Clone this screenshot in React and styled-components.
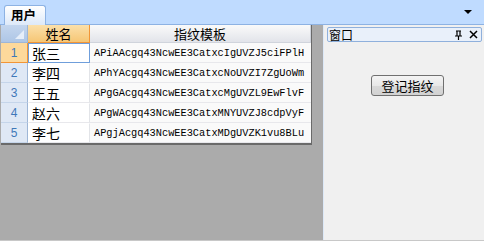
import React from "react";
import styled, { createGlobalStyle } from "styled-components";

const rows = [
  { id: 1, name: "张三", tpl: "APiAAcgq43NcwEE3CatxcIgUVZJ5ciFPlH" },
  { id: 2, name: "李四", tpl: "APhYAcgq43NcwEE3CatxcNoUVZI7ZgUoWm" },
  { id: 3, name: "王五", tpl: "APgGAcgq43NcwEE3CatxcMgUVZL9EwFlvF" },
  { id: 4, name: "赵六", tpl: "APgWAcgq43NcwEE3CatxMNYUVZJ8cdpVyF" },
  { id: 5, name: "李七", tpl: "APgjAcgq43NcwEE3CatxMDgUVZK1vu8BLu" },
];

const GlobalStyle = createGlobalStyle`
  body {
    margin: 0;
    font-family: "Noto Sans CJK SC", "Liberation Sans", sans-serif;
  }
`;

const App = () => (
  <>
    <GlobalStyle />
    <Frame>
      <TopBar>
        <Tab>用户</Tab>
        <DropArrow />
      </TopBar>
      <Body>
        <GridArea>
          <Grid>
            <Corner />
            <HeaderCell $active>姓名</HeaderCell>
            <HeaderCell>指纹模板</HeaderCell>
            {rows.map((r, i) => (
              <React.Fragment key={r.id}>
                <RowNum $active={i === 0}>{r.id}</RowNum>
                <NameCell $focused={i === 0}>{r.name}</NameCell>
                <TplCell>{r.tpl}</TplCell>
              </React.Fragment>
            ))}
          </Grid>
        </GridArea>
        <Splitter />
        <SidePanel>
          <PanelTitle>
            <span>窗口</span>
            <TitleIcons>
              <svg width="9" height="10" viewBox="0 0 9 10">
                <path d="M2 1h5M3 1v5M6 1v5M1 6h7M4.5 6v4" stroke="#000" strokeWidth="1.2" fill="none" />
              </svg>
              <svg width="9" height="9" viewBox="0 0 9 9">
                <path d="M1 1l7 7M8 1l-7 7" stroke="#000" strokeWidth="1.5" />
              </svg>
            </TitleIcons>
          </PanelTitle>
          <ButtonRow>
            <Button>登记指纹</Button>
          </ButtonRow>
        </SidePanel>
      </Body>
    </Frame>
  </>
);

export default App;

const Frame = styled.div`
  width: 484px;
  height: 241px;
  display: flex;
  flex-direction: column;
  box-sizing: border-box;
  border-bottom: 1px solid #c8c8c8;
  overflow: hidden;
`;

const TopBar = styled.div`
  height: 24px;
  flex: none;
  background: #bfdbff;
  border-bottom: 1px solid #8db2e3;
  display: flex;
  align-items: flex-end;
  padding: 0 0 0 4px;
  position: relative;
`;

const Tab = styled.div`
  width: 42px;
  height: 20px;
  box-sizing: border-box;
  margin-bottom: -1px;
  border: 1px solid #8db2e3;
  border-bottom: none;
  border-radius: 3px 3px 0 0;
  background: linear-gradient(#ffffff, #dde9f9);
  font-size: 12.5px;
  font-weight: bold;
  line-height: 18px;
  padding-left: 6px;
  color: #000;
`;

const DropArrow = styled.div`
  position: absolute;
  right: 12px;
  top: 10px;
  width: 0;
  height: 0;
  border-left: 4px solid transparent;
  border-right: 4px solid transparent;
  border-top: 4px solid #000;
`;

const Body = styled.div`
  flex: 1;
  display: flex;
  min-height: 0;
`;

const GridArea = styled.div`
  width: 323px;
  flex: none;
  background: #ababab;
  padding-left: 1px;
  box-sizing: border-box;
`;

const Grid = styled.div`
  width: 311px;
  display: grid;
  grid-template-columns: 27px 62px 1fr;
  grid-auto-rows: 20px;
  grid-template-rows: 18px;
  background: #fafafa;
  border-right: 1px solid #6a6a6a;
  border-bottom: 2px solid #6a6a6a;
  box-sizing: border-box;
`;

const Corner = styled.div`
  background: linear-gradient(#c4d6ee, #aec6e6);
  border-right: 1px solid #9eb6d6;
  border-bottom: 1px solid #9eb6d6;
  position: relative;
  &::after {
    content: "";
    position: absolute;
    right: 3px;
    bottom: 3px;
    border-left: 9px solid transparent;
    border-bottom: 9px solid #e6eef9;
  }
`;

const HeaderCell = styled.div`
  display: flex;
  align-items: center;
  justify-content: center;
  font-size: 13px;
  color: #000;
  box-sizing: border-box;
  background: ${(p) =>
    p.$active ? "linear-gradient(#fbe0aa, #f6c675)" : "linear-gradient(#fafafa, #e2e4ea)"};
  border: 1px solid ${(p) => (p.$active ? "#f29536" : "#d0d4dc")};
  border-top: none;
  border-left: none;
`;

const RowNum = styled.div`
  display: flex;
  align-items: center;
  justify-content: center;
  font-size: 12px;
  font-family: "Liberation Sans", sans-serif;
  color: #3f78b9;
  box-sizing: border-box;
  background: ${(p) => (p.$active ? "#fdd99b" : "#dfe8f5")};
  border-right: 1px solid ${(p) => (p.$active ? "#f29536" : "#9eb6d6")};
  border-bottom: 1px solid ${(p) => (p.$active ? "#f29536" : "#c5d5ea")};
`;

const NameCell = styled.div`
  display: flex;
  align-items: center;
  padding-left: 3px;
  font-size: 14px;
  color: #000;
  box-sizing: border-box;
  background: #fff;
  border: 1px solid ${(p) => (p.$focused ? "#6f9edb" : "transparent")};
  border-right-color: ${(p) => (p.$focused ? "#6f9edb" : "#e2e4e8")};
  border-bottom-color: ${(p) => (p.$focused ? "#6f9edb" : "#e8e8ec")};
`;

const TplCell = styled.div`
  display: flex;
  align-items: center;
  padding-left: 4px;
  font-family: "Liberation Mono", monospace;
  font-size: 10.3px;
  color: #000;
  box-sizing: border-box;
  border-bottom: 1px solid #e8e8ec;
  white-space: nowrap;
  overflow: hidden;
`;

const Splitter = styled.div`
  width: 1px;
  flex: none;
  background: #dce8f7;
`;

const SidePanel = styled.div`
  flex: 1;
  background: #f0f0f0;
  padding: 2px 2px 0 3px;
  display: flex;
  flex-direction: column;
`;

const PanelTitle = styled.div`
  height: 15px;
  box-sizing: border-box;
  border: 1px solid #8fb0dc;
  border-radius: 2px;
  background: #e9f0fa;
  display: flex;
  align-items: center;
  justify-content: space-between;
  font-size: 12px;
  line-height: 13px;
  padding: 0 3px 0 1px;
  color: #000;
`;

const TitleIcons = styled.div`
  display: flex;
  align-items: center;
  gap: 6px;
`;

const ButtonRow = styled.div`
  display: flex;
  justify-content: center;
  padding: 33px 0 0 6px;
`;

const Button = styled.button`
  width: 73px;
  height: 21px;
  border: 1px solid #707070;
  border-radius: 3px;
  background: linear-gradient(#f4f4f4 0%, #e8e8e8 50%, #d9d9d9 51%, #d2d2d2 100%);
  font-family: "Noto Sans CJK SC", sans-serif;
  font-size: 13px;
  color: #000;
  padding: 0;
  line-height: 17px;
`;
